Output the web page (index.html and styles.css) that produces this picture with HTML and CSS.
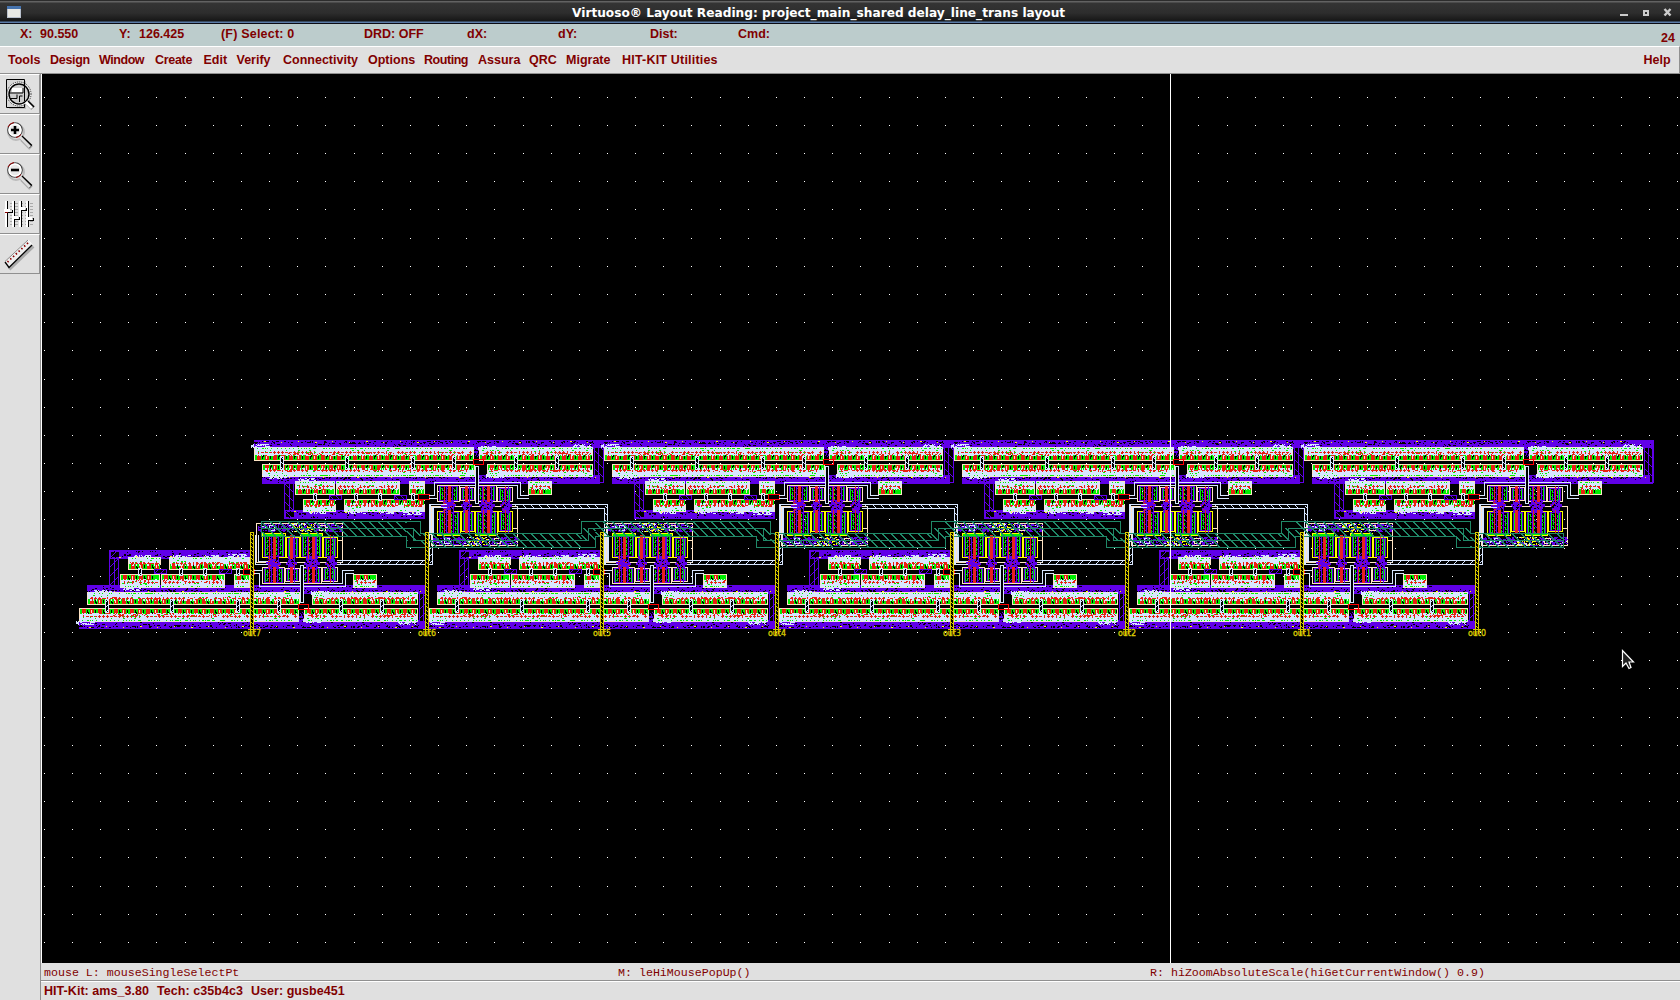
FILE: index.html
```
<!DOCTYPE html>
<html lang="en">
<head>
<meta charset="utf-8">
<title>Virtuoso Layout Reading</title>
<link rel="stylesheet" href="styles.css">
</head>
<body>
<div class="window">
  <header class="titlebar">
    <svg class="winicon" width="14" height="12" viewBox="0 0 14 12"><rect width="14" height="12" fill="#b9c0cc"/><rect x="0" y="0" width="14" height="3" fill="#4673ad"/><rect x="1" y="3" width="12" height="8" fill="#e9e9e4"/></svg>
    <h1 class="title">Virtuoso® Layout Reading: project_main_shared delay_line_trans layout</h1>
    <svg class="winbtns" width="60" height="24" viewBox="0 0 60 24"><path d="M0 14h8v2h-8z" fill="#ccc"/><path d="M24 11h4v4h-4z" fill="none" stroke="#ccc" stroke-width="2"/><path d="M44.500 9l6 6.500M50.500 9l-6 6.500" stroke="#ccc" stroke-width="2.400"/></svg>
  </header>
  <div class="infobar">
    <span>X:</span><span>90.550</span><span>Y:</span><span>126.425</span><span class="wide">(F) Select: 0</span><span>DRD: OFF</span><span>dX:</span><span>dY:</span><span>Dist:</span><span>Cmd:</span><span class="count">24</span>
  </div>
  <nav class="menubar">
    <span>Tools</span><span class="tight">Design</span><span class="tighter">Window</span><span class="tight">Create</span><span>Edit</span><span>Verify</span><span>Connectivity</span><span>Options</span><span class="tighter">Routing</span><span>Assura</span><span>QRC</span><span>Migrate</span><span class="wide">HIT-KIT Utilities</span><span class="help">Help</span>
  </nav>
  <div class="middle">
    <aside class="tools">
      <div class="tool"><svg width="38" height="38" viewBox="0 0 38 38">
        <path d="M9 6h17v28h-17z" fill="#bbb"/><path d="M6.500 4.500h18v28h-18z" fill="#d8d8d8" stroke="#000"/>
        <circle cx="19" cy="19" r="10.500" fill="#ccc" stroke="#fff" stroke-width="2.500"/><circle cx="19" cy="19" r="10" fill="none" stroke="#000" stroke-width="1.500"/><circle cx="19" cy="19" r="12" fill="none" stroke="#222" stroke-dasharray="1 1"/>
        <path d="M12 13h11v4h-11z" fill="#fff"/><path d="M9 18h14v-5M10 23.500h7v-4M19.500 27v-6h3M24.500 8v18" fill="none" stroke="#000"/>
        <path d="M28 28l5 5" stroke="#777" stroke-width="5"/><path d="M26 27l6 6" stroke="#fff" stroke-width="3"/><path d="M28 26l6 6" stroke="#000" stroke-width="1.300"/></svg></div>
      <div class="tool"><svg width="38" height="38" viewBox="0 0 38 38"><path d="M22 24l9 9" stroke="#aaa" stroke-width="5"/><circle cx="16" cy="17" r="8" fill="none" stroke="#bbb" stroke-width="2"/><circle cx="15" cy="15" r="7.200" fill="#e8e8e8" stroke="#444" stroke-width="1.300"/><circle cx="15" cy="15" r="6" fill="none" stroke="#fff" stroke-width="1.500"/><path d="M8 12a7.500 7.500 0 0 1 6-4.500M16 22.500a7.500 7.500 0 0 0 5-3" fill="none" stroke="#900"/><path d="M15 11v8M11 15h8" stroke="#000" stroke-width="2.600"/><path d="M21 22l10 9.500" stroke="#000" stroke-width="4"/><path d="M20 22l10 10" stroke="#ddd" stroke-width="3"/></svg></div>
      <div class="tool"><svg width="38" height="38" viewBox="0 0 38 38"><path d="M22 24l9 9" stroke="#aaa" stroke-width="5"/><circle cx="16" cy="17" r="8" fill="none" stroke="#bbb" stroke-width="2"/><circle cx="15" cy="15" r="7.200" fill="#e8e8e8" stroke="#444" stroke-width="1.300"/><circle cx="15" cy="15" r="6" fill="none" stroke="#fff" stroke-width="1.500"/><path d="M8 12a7.500 7.500 0 0 1 6-4.500M16 22.500a7.500 7.500 0 0 0 5-3" fill="none" stroke="#900"/><path d="M11 15h8" stroke="#000" stroke-width="2.600"/><path d="M21 22l10 9.500" stroke="#000" stroke-width="4"/><path d="M20 22l10 10" stroke="#ddd" stroke-width="3"/></svg></div>
      <div class="tool"><svg width="38" height="38" viewBox="0 0 38 38" shape-rendering="crispEdges"><path d="M5 8.500h28M5 11.500h28M5 14.500h28M5 17.500h28M5 20.500h28M5 23.500h28M5 26.500h28M5 29.500h28" stroke="#aaa" stroke-dasharray="3 2"/><path d="M6.500 6v26M13.500 6v26M20.500 6v26M27.500 6v26" stroke="#fff" stroke-width="3"/><path d="M7.500 6v26M14.500 6v26M21.500 6v26M28.500 6v26" stroke="#000"/><path d="M4 14h6v3h-6zM12 21h6v3h-6zM19 12h6v3h-6zM26 22h6v3h-6z" fill="#fff"/><path d="M7 17.500h5v-3M14 24.500h5v-3M21 15.500h5v-3M28 25.500h5v-3" fill="none" stroke="#000"/><path d="M5 17.500h3" stroke="#800"/></svg></div>
      <div class="tool"><svg width="38" height="38" viewBox="0 0 38 38"><path d="M9 34l24-23" stroke="#aaa" stroke-width="4"/><path d="M5 27L28 5l4 4.500L9 32z" fill="#eee" stroke="#fff"/><path d="M5 27l4 5.500L32 10" fill="none" stroke="#000" stroke-width="1.300"/><path d="M5 26.500L28 5" fill="none" stroke="#888"/><path d="M7.500 27L29 7" stroke="#800" stroke-width="1.800" stroke-dasharray="1.400 2.400"/></svg></div>
    </aside>
    <main class="canvas">
      <svg id="layout" width="1638" height="889" viewBox="42 74 1638 889" shape-rendering="crispEdges"></svg>
    </main>
  </div>
  <footer class="footer">
    <div class="mouse"><span>mouse L: mouseSingleSelectPt</span><span>M: leHiMousePopUp()</span><span>R: hiZoomAbsoluteScale(hiGetCurrentWindow() 0.9)</span></div>
    <div class="kit"><span>HIT-Kit: ams_3.80</span><span>Tech: c35b4c3</span><span>User: gusbe451</span></div>
  </footer>
</div>
<script src="layout.js"></script>
</body>
</html>
```
FILE: styles.css
```
* { box-sizing: border-box; }
body { margin: 0; background: #e0e0e0; }
.window { width: 1680px; height: 1000px; display: flex; flex-direction: column; overflow: hidden; font: bold 12.5px/16px "Liberation Sans", Arial, sans-serif; color: #800000; white-space: nowrap; }
.titlebar { height: 24px; display: grid; grid-template-columns: 572px 1fr 60px; align-items: center; background: linear-gradient(#2c2c2c 0, #2c2c2c 1px, #626262 1px, #626262 2px, #343434 3px, #2d2d2d 13px, #191919 20px, #151515 21px, #5a7ba8 22px, #5a7ba8 23px, #0a0a12 23px); }
.winicon { margin-left: 7px; }
.title { margin: 0; color: #fff; font: bold 12.18px/20px "DejaVu Sans", sans-serif; padding-top: 1px; }
.winbtns { margin-left: 0; }
.infobar { height: 22px; background: #bccccc; display: grid; grid-template-columns: 20px 79px 20px 82px 143px 103px 91px 92px 88px 923px 19px; padding: 2px 0 0 20px; }
.count { padding-top: 4px; }
.menubar { height: 28px; border-top: 1px solid #fff; border-bottom: 1px solid #909090; border-right: 1px solid #909090; display: grid; grid-template-columns: 42px 49px 56px 48.5px 33px 46.500px 85px 56px 54px 51px 37px 56px 1021.5px 36px; padding: 5px 0 0 8px; }
.wide { letter-spacing: 0.2px; }
.tight { letter-spacing: -0.3px; }
.tighter { letter-spacing: -0.45px; }
.middle { height: 889px; display: flex; }
.tools { width: 42px; border-right: 1px solid #fff; box-shadow: inset -1px 0 #909090; }
.tool { width: 40px; height: 40px; border-top: 1px solid #fff; border-bottom: 1px solid #909090; border-right: 1px solid #909090; }
.tool svg { display: block; }
.canvas { width: 1638px; background: #000; }
#layout { display: block; }
.pin { font: 9.500px "DejaVu Sans", sans-serif; fill: #d8c800; stroke: #d8c800; stroke-width: 0.4px; }
.footer { margin-left: 40px; border-left: 1px solid #909090; height: 37px; }
.mouse { height: 19px; border-bottom: 1px solid #fff; box-shadow: inset 0 -1px #909090; display: grid; grid-template-columns: 574px 532px 1fr; padding: 1px 0 0 3px; font: 11.640px/17px "Liberation Mono", monospace; }
.kit { display: flex; gap: 8px; padding: 1px 0 0 3px; letter-spacing: 0.05px; }
```
FILE: layout.js
```
(function () {
  var svg = document.getElementById('layout');
  var P = '#6000e8', W = '#d8e6ff', G = '#00f000', R = '#e82010', C = '#ffe4c4', Y = '#ffff00', K = '#000', T = '#208868', O = '#d8c800';
  var seed = 7;
  function rnd() { seed = (seed * 1103515245 + 12345) % 2147483648; return seed / 2147483648; }

  // Collects runs of same-coloured rectangles into one path each
  function Pen() { this.out = []; this.col = null; this.d = ''; }
  Pen.prototype.r = function (c, x, y, w, h) {
    if (c !== this.col) { this.flush(); this.col = c; }
    this.d += 'M' + x + ' ' + y + 'h' + w + 'v' + h + 'h' + (-w) + 'z';
  };
  Pen.prototype.flush = function () {
    if (this.d) this.out.push('<path fill="' + this.col + '" d="' + this.d + '"/>');
    this.d = '';
  };
  Pen.prototype.box = function (c, x, y, w, h) {
    this.r(c, x, y, w, 1); this.r(c, x, y + h - 1, w, 1);
    this.r(c, x, y, 1, h); this.r(c, x + w - 1, y, 1, h);
  };
  Pen.prototype.noise = function (c, x, y, w, h, p) {
    for (var j = y; j < y + h; j++) for (var i = x; i < x + w; i++)
      if (rnd() < p) this.r(c, i, j, rnd() < 0.4 ? 2 : 1, 1);
  };
  Pen.prototype.hatch = function (c, x, y, w, h, step) {
    for (var j = 0; j < h; j++) for (var i = 0; i < w; i++)
      if (((i - j) % step + step) % step === 0) this.r(c, x + i, y + j, 1, 1);
  };
  Pen.prototype.band = function (x, y, w, h) {
    this.r(P, x, y, w, h);
    this.noise(K, x, y + 1, w, 3, 0.16);
    this.noise(K, x, y + 4, w, h - 5, 0.05);
    for (var i = x + 10; i < x + w; i += 17) this.r(Y, i, y + 1 + (i % 2), i % 3 ? 1 : 2, 1);
  };

  // Row of devices: contacts on one side, instance names over the other
  Pen.prototype.row = function (x, y, w, h, textTop) {
    var ey = textTop ? y + h - 6 : y + 1, wy = textTop ? y + 2 : y + 6, wh = h - 8, i, j;
    this.r(G, x, y, w, h);
    this.box(C, x, y, w, h);
    for (i = x + 2; i < x + w - 5; i += 8) this.r(K, i + 6, ey + 1, 1, 3);
    for (i = x + 2; i < x + w - 9; i += 16) { this.r(K, i + 7, ey, 1, 2); this.r(K, i + 1, ey + 2, 1, 3); }
    for (i = x + 3; i < x + w - 5; i += 8) this.r(R, i, ey, 4, 5);
    for (i = x + 4; i < x + w - 10; i += 16) this.r(C, i + 8, ey + 1, 1, 3);
    this.r(W, x + 1, wy, w - 2, wh);
    // Ragged outer edge of the overlapping names
    for (i = x; i < x + w; i++) {
      j = Math.floor(rnd() * 3);
      if (textTop) this.r(W, i, wy - j, 1, j + 1); else this.r(W, i, wy + wh - 1, 1, j + 1);
    }
    for (i = x + 1; i < x + w - 2; i++) if (rnd() < 0.35) this.r(W, i, textTop ? ey - 1 : ey + 3, 1, 2);
    for (i = x + 3; i < x + w - 4; i += 4) {
      if (rnd() < 0.75) this.r(R, i, textTop ? y + 5 : y + h - 7, 3, 1);
      if (rnd() < 0.6) this.r(R, i + 1, textTop ? y + 4 : y + h - 8, 1, 3);
    }
    this.noise(R, x + 2, textTop ? ey - 2 : ey + 5, w - 4, 2, 0.14);
    this.noise(G, x + 2, wy + 1, w - 4, wh - 2, 0.04);
  };
  Pen.prototype.via = function (x, y, h) {
    this.r(K, x, y, 4, h); this.box(W, x, y, 4, h); this.hatch(W, x, y, 4, h, 5);
  };
  Pen.prototype.device = function (x, y, w, h, edge) {
    this.box(edge, x, y, w, h);
    this.box(P, x + 2, y + 1, w - 4, h - 2);
    this.hatch(P, x + 3, y + 2, w - 6, h - 4, 6);
    this.r(P, x + 7, y + 1, 1, h - 2); this.r(P, x + w - 8, y + 1, 1, h - 2);
    for (var j = y + 3; j < y + h - 3; j += 4) {
      this.r(G, x + 5, j, 1, 3); this.r(G, x + w - 6, j + 1, 1, 3);
      if (w > 18) { this.r(G, x + 9, j + 1, 1, 2); this.r(G, x + w - 10, j, 1, 3); }
    }
    this.r(G, x + 3, y + 2, 1, h - 4); this.r(G, x + w - 4, y + 2, 1, h - 4);
  };

  // One delay stage; coordinates are those of the first stage in the upper row
  var p = new Pen(), i;
  p.band(254, 440, 350, 9);
  p.r(K, 594, 448, 10, 36);
  p.box(P, 594, 441, 5, 42); p.box(P, 598, 441, 6, 42);
  p.hatch(P, 595, 442, 8, 40, 9);
  p.band(262, 475, 338, 9);
  p.box(P, 284, 483, 10, 36); p.box(P, 289, 483, 5, 30); p.hatch(P, 285, 484, 8, 34, 9);
  p.band(284, 510, 141, 9);
  p.r(K, 286, 512, 8, 5); p.hatch(P, 285, 511, 12, 7, 8);
  p.r(K, 472, 448, 9, 11); p.noise(P, 470, 447, 12, 10, 0.4);
  p.row(254, 447, 220, 14, true);
  p.row(479, 447, 114, 14, true);
  p.row(262, 464, 213, 13, false);
  p.row(487, 464, 106, 13, false);
  p.row(295, 481, 40, 14, true);
  p.row(336, 481, 64, 14, true);
  p.row(409, 481, 16, 14, true);
  p.row(528, 481, 24, 14, true);
  p.row(303, 499, 33, 13, false);
  p.row(344, 499, 81, 13, false);
  [[300, 479], [253, 445], [480, 447], [575, 445], [488, 475], [270, 476], [310, 511], [350, 511], [378, 511], [405, 512]].forEach(function (a) {
    p.noise(W, a[0] - 2, a[1] - 1, 18, 4, 0.45);
  });
  [280, 345, 411, 452, 514, 555].forEach(function (x) { p.via(x, 456, 14); });
  [313, 354, 378, 411].forEach(function (x) { p.via(x, 493, 8); });
  p.box(P, 329, 495, 13, 5); p.hatch(P, 330, 496, 11, 3, 6);
  p.box(P, 394, 495, 13, 5); p.hatch(P, 395, 496, 11, 3, 6);
  p.box('#f00', 473, 459, 11, 6); p.box('#f00', 418, 494, 12, 6);

  // Supply ring round the inverter
  p.r(W, 435, 482, 86, 1); p.r(W, 438, 485, 80, 1);
  p.r(W, 434, 482, 1, 14); p.r(W, 437, 485, 1, 14); p.r(W, 429, 495, 6, 1); p.r(W, 429, 498, 8, 1);
  p.r(W, 517, 485, 1, 14); p.r(W, 520, 482, 1, 14); p.r(W, 517, 498, 12, 1); p.r(W, 520, 495, 9, 1);
  p.box(C, 431, 506, 87, 40); p.r(C, 512, 528, 6, 1);
  p.device(437, 485, 23, 17, C); p.device(460, 487, 15, 14, C); p.device(475, 485, 22, 17, C); p.device(497, 487, 16, 15, C);
  p.device(437, 511, 24, 25, Y); p.device(461, 511, 14, 21, Y); p.device(475, 511, 23, 25, Y); p.device(498, 511, 15, 21, Y);
  [[443, 11], [463, 7], [481, 12], [502, 8]].forEach(function (a) {
    p.r(P, a[0], 501, a[1], 11); p.r(P, a[0] - 2, 504, a[1] + 4, 3);
    p.noise(K, a[0], 501, a[1], 11, 0.15); p.noise(R, a[0], 502, a[1], 8, 0.06);
  });
  [[448, 3], [444, 1], [465, 3], [483, 1], [487, 3], [505, 1]].forEach(function (a) { p.r('#e82020', a[0], 486, a[1], 16); p.r('#e82020', a[0], 510, a[1], 24); });
  [[446, 1], [469, 1], [491, 1], [508, 1]].forEach(function (a) { p.r(P, a[0], 486, a[1], 48); });
  p.r(C, 455, 506, 7, 1); p.r(C, 472, 506, 8, 1); p.r(C, 495, 506, 6, 1);
  p.r(G, 438, 533, 21, 2); p.r(G, 476, 533, 21, 2);
  p.noise(P, 433, 537, 84, 8, 0.45); p.noise(W, 433, 539, 84, 5, 0.05);
  p.r(K, 467, 537, 22, 9); p.noise(Y, 467, 537, 22, 9, 0.28); p.noise(P, 467, 537, 22, 9, 0.15); p.noise(W, 467, 537, 22, 9, 0.12);
  p.box(C, 494, 538, 7, 6); p.box(W, 444, 538, 6, 6);
  p.r(K, 475, 466, 4, 38); p.box(W, 475, 466, 4, 38);
  p.flush();
  var stage = p.out.join('');

  // Output wire of a stage to the next one
  p = new Pen();
  p.r(W, 512, 504, 96, 1); p.r(W, 512, 508, 93, 1);
  p.r(W, 604, 508, 1, 57); p.r(W, 607, 504, 1, 58);
  p.r(W, 604, 564, 18, 1); p.r(W, 607, 561, 15, 1);
  p.hatch(W, 515, 505, 88, 3, 8); p.hatch(W, 605, 506, 2, 55, 7);
  p.flush();
  var wire = p.out.join('');
  p = new Pen();
  p.r(W, 430, 504, 13, 1); p.r(W, 433, 507, 10, 1); p.r(W, 430, 504, 1, 30); p.r(W, 433, 507, 1, 27);
  p.flush();
  var input = p.out.join('');

  var html = '<defs><g id="stage">' + stage + '</g><g id="wire">' + wire + '</g><g id="input">' + input + '</g></defs>';

  // Grid
  p = new Pen();
  for (var gy = 0; gy < 31; gy++) for (var gx = 0; gx < 59; gx++)
    p.r('#fff', Math.floor(44.3 + gx * 28.16), Math.floor(97.3 + gy * 28.17), 1, 1);
  p.flush();
  html += p.out.join('');

  for (i = 0; i < 4; i++) {
    html += '<use href="#stage" transform="translate(' + i * 350 + ' 0)"/>';
    html += '<use href="#stage" transform="translate(' + (i * 350 - 175) + ' 1069) scale(1 -1)"/>';
    html += '<use href="#input" transform="translate(' + i * 350 + ' 0)"/><use href="#input" transform="translate(' + (i * 350 - 175) + ' 1069) scale(1 -1)"/>';
    if (i < 3) html += '<use href="#wire" transform="translate(' + i * 350 + ' 0)"/>';
    html += '<use href="#wire" transform="translate(' + (i * 350 - 175) + ' 1069) scale(1 -1)"/>';
  }

  // Closing rail at the right end
  p = new Pen();
  p.box(P, 1644, 441, 9, 43); p.r(P, 1636, 440, 17, 4);

  // Bus between both rows: three tracks that step down and up again
  function clampRun(a, b, y) { if (b > 1564) b = 1564; if (a < b) p.r(T, a, y, b - a, 1); }
  [[0, 521, 533], [7, 528, 540], [14, 536, 547]].forEach(function (t) {
    for (var k = -1; k < 3; k++) {
      var up = 581 + t[0] + k * 350, down = 770 - t[0] + k * 350;
      if (k < 0) up = 261;
      clampRun(up, down + 1, t[1]);
      p.r(T, down, t[1], 1, t[2] - t[1] + 1);
      clampRun(down, 581 + t[0] + (k + 1) * 350, t[2]);
      if (k >= 0) p.r(T, up, t[1], 1, t[2] - t[1] + 1);
    }
  });
  p.r(T, 261, 521, 1, 16); p.r(T, 1563, 533, 1, 15);
  for (var x = 262; x < 1562; x++) {
    var m = ((x - 420) % 350 + 350) % 350, low = m < 161;
    if (m > 335 || (m > 160 && m < 175)) {
      for (var v = 0; v < 26; v++) if ((x - v) % 9 === 0 && v > 6 && v < 20) p.r(T, x, 521 + v, 2, 1);
      continue;
    }
    var y0 = low ? 534 : 522;
    for (var j = 0; j < 14; j++) if ((x - j) % 9 === 0) p.r(T, x, y0 + j, 2, 1);
  }

  // Output pins
  for (i = 0; i < 8; i++) {
    var px = 250 + i * 175;
    p.r(K, px, 532, 4, 98); p.box(O, px, 532, 4, 98);
    for (var q = 534; q < 628; q += 4) { p.r(O, px + 1, q, 1, 1); p.r(O, px + 2, q + 1, 1, 1); }
    p.r(O, px - 2, 629, 8, 1); p.r(O, px, 626, 1, 10); p.r(O, px + 3, 626, 1, 8);
  }
  p.r('#fff', 1170, 74, 1, 889);
  p.flush();
  html += p.out.join('');
  for (i = 0; i < 8; i++)
    html += '<text class="pin" x="' + (243 + i * 175) + '" y="636" textLength="18" lengthAdjust="spacingAndGlyphs">out' + (7 - i) + '</text>';

  // Pointer
  html += '<path shape-rendering="auto" d="M1622.500 650.500v16l3.500-3.500 3 5.500 2-1-2-5.500h4.500z" fill="#222" stroke="#fff" stroke-width="1.200"/>';
  svg.innerHTML = html;
})();
```
